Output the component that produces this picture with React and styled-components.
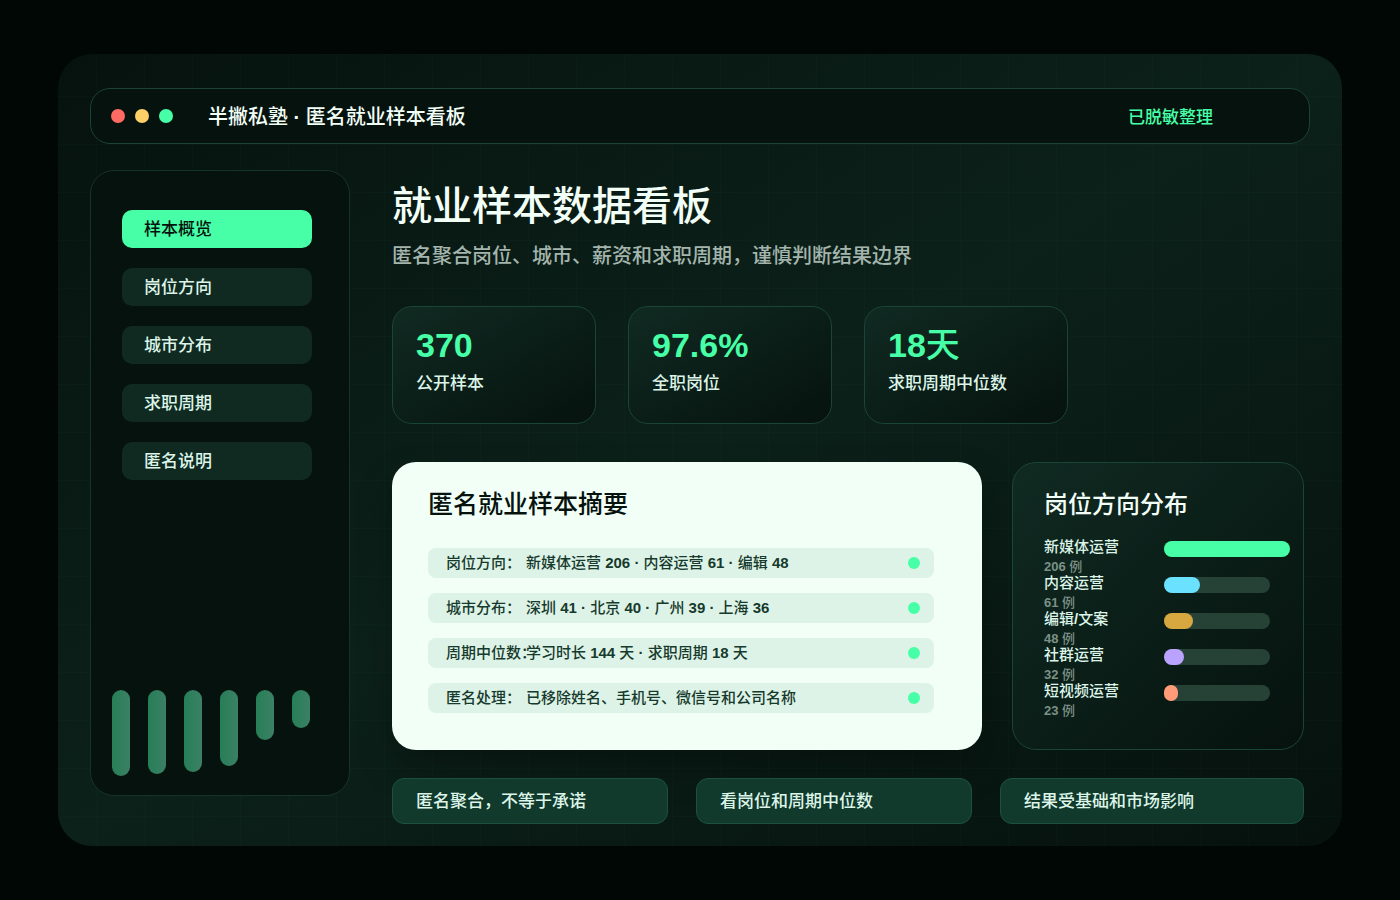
import { useState } from "react";
import styled, { createGlobalStyle } from "styled-components";

const GlobalStyle = createGlobalStyle`
  * {
    box-sizing: border-box;
  }
  body {
    margin: 0;
    background-color: #010705;
    color: #f2fff7;
    font-family: "Liberation Sans", "Noto Sans CJK SC", sans-serif;
    font-weight: 500;
  }
  h1, h2, p, dl, dd, ul {
    margin: 0;
    padding: 0;
    font-weight: inherit;
  }
  ul {
    list-style: none;
  }
`;

const Page = styled.div`
  display: flex;
  min-height: 100vh;
  padding: 54px 58px;
  background-color: #010705;
`;

const Screen = styled.div`
  flex: 1;
  display: flex;
  flex-direction: column;
  gap: 26px;
  padding: 34px 32px 22px;
  border-radius: 34px;
  background:
    linear-gradient(to right, rgba(70, 255, 166, 0.015) 1px, transparent 1px) 38px 0 / 48px 48px,
    linear-gradient(to bottom, rgba(70, 255, 166, 0.015) 1px, transparent 1px) 0 42px / 48px 48px,
    linear-gradient(to bottom right, #06120e, #0c211a 50%, #06110d);
`;

const TopBar = styled.header`
  display: flex;
  align-items: center;
  height: 56px;
  padding: 0 96px 0 20px;
  border: 1px solid #1a4435;
  border-radius: 20px;
  background-color: #06120e;
`;

const Lights = styled.div`
  display: flex;
  gap: 10px;
  margin-right: 35px;
`;

const Light = styled.span`
  width: 14px;
  height: 14px;
  border-radius: 50%;
  background-color: ${(props) => props.color};
`;

const AppName = styled.span`
  padding-top: 2px;
  font-size: 20px;
  line-height: 28px;
`;

const Status = styled.span`
  margin-left: auto;
  padding-top: 4px;
  color: #46ffa6;
  font-size: 17px;
  line-height: 24px;
`;

const Body = styled.div`
  flex: 1;
  display: grid;
  grid-template-columns: 260px 1fr;
  gap: 42px;
`;

const Sidebar = styled.aside`
  display: flex;
  flex-direction: column;
  justify-content: space-between;
  margin-bottom: 28px;
  padding: 39px 21px 19px;
  border: 1px solid #15332a;
  border-radius: 24px;
  background-color: #06120e;
`;

const Nav = styled.nav`
  display: flex;
  flex-direction: column;
  gap: 20px;
  padding: 0 16px 0 10px;
`;

const NavButton = styled.button`
  height: 38px;
  padding: 2px 22px 0;
  border: none;
  border-radius: 10px;
  background-color: ${(props) => (props.$active ? "#46ffa6" : "#102a21")};
  color: ${(props) => (props.$active ? "#06120e" : "#dcf5e8")};
  font: inherit;
  font-size: 17px;
  line-height: 24px;
  text-align: left;
  cursor: pointer;
`;

const MiniChart = styled.div`
  display: flex;
  align-items: flex-start;
  gap: 18px;
  height: 86px;
`;

const MiniBar = styled.span`
  width: 18px;
  height: ${(props) => props.$height}px;
  border-radius: 9px;
  background: linear-gradient(to right, #267f57, #3c8065);
`;

const Main = styled.main`
  display: flex;
  flex-direction: column;
  padding-right: 6px;
`;

const Title = styled.h1`
  margin-top: 8px;
  font-size: 40px;
  line-height: 56px;
`;

const Subtitle = styled.p`
  margin-top: 8px;
  color: #a3b5ac;
  font-size: 20px;
  line-height: 28px;
`;

const Stats = styled.section`
  display: grid;
  grid-template-columns: repeat(3, 204px);
  gap: 32px;
  margin-top: 36px;
`;

const panel = `
  border: 1px solid #1a4435;
  background: linear-gradient(to bottom right, #102a22, #06120e);
`;

const StatCard = styled.div`
  ${panel}
  height: 118px;
  padding: 14px 23px;
  border-radius: 20px;
`;

const StatValue = styled.p`
  color: #46ffa6;
  font-size: 34px;
  line-height: 48px;
`;

const StatLabel = styled.p`
  margin-top: 3px;
  color: #dcf5e8;
  font-size: 17px;
  line-height: 24px;
`;

const Panels = styled.div`
  display: grid;
  grid-template-columns: 590fr 292fr;
  gap: 30px;
  margin-top: 38px;
`;

const Summary = styled.section`
  padding: 24px 48px 37px 36px;
  border-radius: 24px;
  background-color: #f2fff7;
  box-shadow: 0 18px 36px rgba(0, 0, 0, 0.28);
`;

const SummaryTitle = styled.h2`
  color: #06120e;
  font-size: 25px;
  line-height: 36px;
`;

const SummaryList = styled.dl`
  display: flex;
  flex-direction: column;
  gap: 15px;
  margin-top: 26px;
`;

const SummaryRow = styled.div`
  display: flex;
  align-items: center;
  height: 30px;
  padding: 0 14px 0 18px;
  border-radius: 8px;
  background-color: #def3e8;
  color: #163a2c;
  font-size: 15px;
  line-height: 20px;
  white-space: nowrap;

  dt {
    width: 80px;
  }
`;

const Dot = styled.span`
  width: 12px;
  height: 12px;
  margin-left: auto;
  border-radius: 50%;
  background-color: #46ffa6;
`;

const Distribution = styled.section`
  ${panel}
  padding: 24px 31px;
  border-radius: 24px;
`;

const DistributionTitle = styled.h2`
  font-size: 24px;
  line-height: 36px;
`;

const DistributionList = styled.ul`
  margin-top: 14px;
`;

const DistributionItem = styled.li`
  display: grid;
  grid-template-columns: 120px 106px;
  height: 36px;
`;

const JobName = styled.p`
  color: #dcf5e8;
  font-size: 15px;
  line-height: 20px;
`;

const JobCount = styled.p`
  color: #7b9186;
  font-size: 13px;
  line-height: 20px;
`;

const Track = styled.div`
  height: 16px;
  margin-top: 4px;
  border-radius: 8px;
  background-color: #264237;
`;

const Fill = styled.div`
  height: 100%;
  border-radius: 8px;
  background-color: ${(props) => props.color};
`;

const Notes = styled.footer`
  display: grid;
  grid-template-columns: 276fr 276fr 304fr;
  gap: 28px;
  margin-top: 28px;
`;

const Note = styled.p`
  height: 46px;
  padding: 11px 23px;
  border: 1px solid #1c5140;
  border-radius: 12px;
  background-color: #11392c;
  color: #dcf5e8;
  font-size: 17px;
  line-height: 24px;
`;

const navItems = ["样本概览", "岗位方向", "城市分布", "求职周期", "匿名说明"];
const miniBars = [86, 84, 82, 76, 50, 38];

const stats = [
  { value: "370", label: "公开样本" },
  { value: "97.6%", label: "全职岗位" },
  { value: "18天", label: "求职周期中位数" },
];

const summary = [
  ["岗位方向：", "新媒体运营 206 · 内容运营 61 · 编辑 48"],
  ["城市分布：", "深圳 41 · 北京 40 · 广州 39 · 上海 36"],
  ["周期中位数：", "学习时长 144 天 · 求职周期 18 天"],
  ["匿名处理：", "已移除姓名、手机号、微信号和公司名称"],
];

const jobs = [
  { name: "新媒体运营", count: 206, width: 126, color: "#46ffa6" },
  { name: "内容运营", count: 61, width: 36, color: "#6ae2ff" },
  { name: "编辑/文案", count: 48, width: 29, color: "#d6a83f" },
  { name: "社群运营", count: 32, width: 20, color: "#b9a3ff" },
  { name: "短视频运营", count: 23, width: 14, color: "#ff9b78" },
];

const notes = ["匿名聚合，不等于承诺", "看岗位和周期中位数", "结果受基础和市场影响"];

// numbers and separators are set bold, the text around them medium
function boldNumbers(text) {
  return text
    .split(/([\d.%·/]+)/)
    .map((part, i) => (i % 2 ? <b key={i}>{part}</b> : part));
}

function App() {
  const [active, setActive] = useState(navItems[0]);

  return (
    <>
      <GlobalStyle />
      <Page>
        <Screen>
          <TopBar>
            <Lights>
              <Light color="#ff6b63" />
              <Light color="#ffd068" />
              <Light color="#46ffa6" />
            </Lights>
            <AppName>{boldNumbers("半撇私塾 · 匿名就业样本看板")}</AppName>
            <Status>已脱敏整理</Status>
          </TopBar>
          <Body>
            <Sidebar>
              <Nav>
                {navItems.map((item) => (
                  <NavButton
                    key={item}
                    type="button"
                    $active={item === active}
                    onClick={() => setActive(item)}
                  >
                    {item}
                  </NavButton>
                ))}
              </Nav>
              <MiniChart>
                {miniBars.map((height) => (
                  <MiniBar key={height} $height={height} />
                ))}
              </MiniChart>
            </Sidebar>
            <Main>
              <Title>就业样本数据看板</Title>
              <Subtitle>匿名聚合岗位、城市、薪资和求职周期，谨慎判断结果边界</Subtitle>
              <Stats>
                {stats.map((stat) => (
                  <StatCard key={stat.label}>
                    <StatValue>{boldNumbers(stat.value)}</StatValue>
                    <StatLabel>{stat.label}</StatLabel>
                  </StatCard>
                ))}
              </Stats>
              <Panels>
                <Summary>
                  <SummaryTitle>匿名就业样本摘要</SummaryTitle>
                  <SummaryList>
                    {summary.map(([label, text]) => (
                      <SummaryRow key={label}>
                        <dt>{label}</dt>
                        <dd>{boldNumbers(text)}</dd>
                        <Dot />
                      </SummaryRow>
                    ))}
                  </SummaryList>
                </Summary>
                <Distribution>
                  <DistributionTitle>岗位方向分布</DistributionTitle>
                  <DistributionList>
                    {jobs.map((job) => (
                      <DistributionItem key={job.name}>
                        <div>
                          <JobName>{boldNumbers(job.name)}</JobName>
                          <JobCount>{boldNumbers(`${job.count} 例`)}</JobCount>
                        </div>
                        <Track>
                          <Fill color={job.color} style={{ width: job.width }} />
                        </Track>
                      </DistributionItem>
                    ))}
                  </DistributionList>
                </Distribution>
              </Panels>
              <Notes>
                {notes.map((note) => (
                  <Note key={note}>{note}</Note>
                ))}
              </Notes>
            </Main>
          </Body>
        </Screen>
      </Page>
    </>
  );
}

export default App;
